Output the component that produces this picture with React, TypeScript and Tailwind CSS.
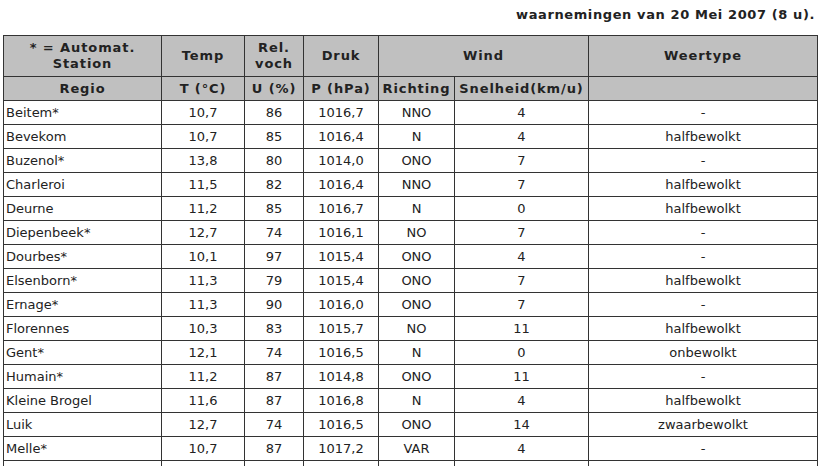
import React from "react";

type Row = [string, string, string, string, string, string, string];

const rows: Row[] = [
  ["Beitem*", "10,7", "86", "1016,7", "NNO", "4", "-"],
  ["Bevekom", "10,7", "85", "1016,4", "N", "4", "halfbewolkt"],
  ["Buzenol*", "13,8", "80", "1014,0", "ONO", "7", "-"],
  ["Charleroi", "11,5", "82", "1016,4", "NNO", "7", "halfbewolkt"],
  ["Deurne", "11,2", "85", "1016,7", "N", "0", "halfbewolkt"],
  ["Diepenbeek*", "12,7", "74", "1016,1", "NO", "7", "-"],
  ["Dourbes*", "10,1", "97", "1015,4", "ONO", "4", "-"],
  ["Elsenborn*", "11,3", "79", "1015,4", "ONO", "7", "halfbewolkt"],
  ["Ernage*", "11,3", "90", "1016,0", "ONO", "7", "-"],
  ["Florennes", "10,3", "83", "1015,7", "NO", "11", "halfbewolkt"],
  ["Gent*", "12,1", "74", "1016,5", "N", "0", "onbewolkt"],
  ["Humain*", "11,2", "87", "1014,8", "ONO", "11", "-"],
  ["Kleine Brogel", "11,6", "87", "1016,8", "N", "4", "halfbewolkt"],
  ["Luik", "12,7", "74", "1016,5", "ONO", "14", "zwaarbewolkt"],
  ["Melle*", "10,7", "87", "1017,2", "VAR", "4", "-"],
  ["", "", "", "", "", "", ""],
];

const th =
  "border border-[#333] bg-[#c0c0c0] font-bold text-center p-0 leading-[16px] tracking-[0.9px]";
const td = "border border-[#333] p-0 text-center";

export default function App() {
  return (
    <div className="w-[818px] h-[466px] overflow-hidden bg-white text-[13px] text-[#222] font-['DejaVu_Sans','Verdana',sans-serif]">
      <div className="h-[35px] pt-[6px] pr-[3px] text-right font-bold leading-[18px] tracking-[0.6px]">
        waarnemingen van 20 Mei 2007 (8 u).
      </div>
      <table className="ml-[3px] w-[814px] table-fixed border-collapse">
        <colgroup>
          <col className="w-[158px]" />
          <col className="w-[83px]" />
          <col className="w-[59px]" />
          <col className="w-[75px]" />
          <col className="w-[76px]" />
          <col className="w-[134px]" />
          <col className="w-[229px]" />
        </colgroup>
        <thead>
          <tr className="h-[41px]">
            <th className={th}>
              * = Automat.
              <br />
              Station
            </th>
            <th className={th}>Temp</th>
            <th className={th}>
              Rel.
              <br />
              voch
            </th>
            <th className={th}>Druk</th>
            <th className={th} colSpan={2}>
              Wind
            </th>
            <th className={th}>Weertype</th>
          </tr>
          <tr className="h-[24px]">
            <th className={th}>Regio</th>
            <th className={th}>T (°C)</th>
            <th className={th}>U (%)</th>
            <th className={th}>P (hPa)</th>
            <th className={th}>Richting</th>
            <th className={th + " whitespace-nowrap tracking-[0.7px]"}>Snelheid(km/u)</th>
            <th className={th}></th>
          </tr>
        </thead>
        <tbody>
          {rows.map((r, i) => (
            <tr key={i} className="h-[24px]">
              <td className={td + " text-left pl-[2px]"}>{r[0]}</td>
              <td className={td}>{r[1]}</td>
              <td className={td}>{r[2]}</td>
              <td className={td}>{r[3]}</td>
              <td className={td}>{r[4]}</td>
              <td className={td}>{r[5]}</td>
              <td className={td}>{r[6]}</td>
            </tr>
          ))}
        </tbody>
      </table>
    </div>
  );
}
